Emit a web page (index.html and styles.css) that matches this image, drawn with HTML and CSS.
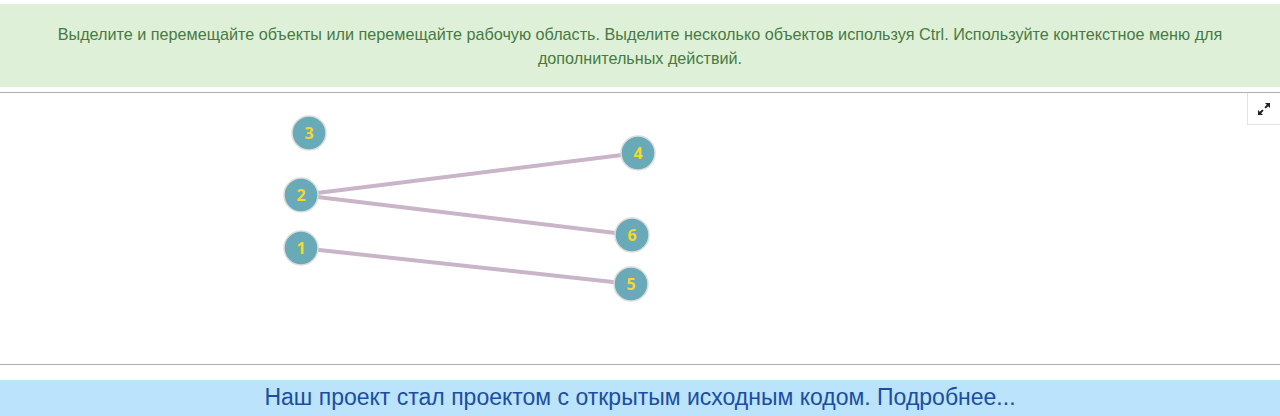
FILE: index.html
```html
<!DOCTYPE html>
<html lang="ru">
<head>
<meta charset="utf-8">
<link rel="stylesheet" href="styles.css">
</head>
<body>
<div class="page">
  <div class="alert">Выделите и перемещайте объекты или перемещайте рабочую область. Выделите несколько объектов используя Ctrl. Используйте контекстное меню для дополнительных действий.</div>
  <div class="canvas">
    <svg class="graph" width="1280" height="271" viewBox="0 93 1280 271">
      <g class="edges">
        <line x1="301" y1="195" x2="638" y2="153"/>
        <line x1="301" y1="195" x2="632" y2="235"/>
        <line x1="301" y1="248" x2="631" y2="284"/>
      </g>
      <g class="nodes">
        <circle cx="309" cy="133" r="17"/><text x="309" y="139">3</text>
        <circle cx="301" cy="195" r="17"/><text x="301" y="201">2</text>
        <circle cx="301" cy="248" r="17"/><text x="301" y="254">1</text>
        <circle cx="638" cy="153" r="17"/><text x="638" y="159">4</text>
        <circle cx="632" cy="235" r="17"/><text x="632" y="241">6</text>
        <circle cx="631" cy="284" r="17"/><text x="631" y="290">5</text>
      </g>
    </svg>
    <button class="fullscreen" aria-label="fullscreen">
      <svg width="14" height="14" viewBox="0 0 14 14">
        <path d="M8 1h5v5l-1.8-1.8-2.4 2.4-1.4-1.4 2.4-2.4z M6 13H1V8l1.8 1.8 2.4-2.4 1.4 1.4-2.4 2.4z" fill="#222"/>
      </svg>
    </button>
  </div>
  <div class="spacer"></div>
  <div class="notice">Наш проект стал проектом с открытым исходным кодом. Подробнее...</div>
</div>
</body>
</html>
```

FILE: styles.css
```css
html, body {
  margin: 0;
  padding: 0;
  background: #fff;
}
body {
  font-family: "Liberation Sans", Arial, sans-serif;
  overflow: hidden;
}
.page {
  display: flex;
  flex-direction: column;
  padding-top: 4px;
}
.alert {
  background: #dff0d8;
  color: #467a42;
  font-size: 16.2px;
  line-height: 24px;
  text-align: center;
  padding: 18px 40px 0;
  height: 65px;
  box-sizing: content-box;
  margin-bottom: 5px;
}
.canvas {
  position: relative;
  height: 271px;
  border-top: 1px solid #b0b0b0;
  border-bottom: 1px solid #b0b0b0;
  overflow: hidden;
}
.graph {
  display: block;
}
.edges line {
  stroke: #c9b4c8;
  stroke-width: 4;
  stroke-linecap: round;
}
.nodes circle {
  fill: #69aab8;
  stroke: #dcdcdc;
  stroke-width: 1.5;
}
.nodes text {
  fill: #f5d829;
  font-family: "Open Sans", "Liberation Sans", sans-serif;
  font-weight: 700;
  font-size: 16px;
  text-anchor: middle;
}
.fullscreen {
  position: absolute;
  top: 0;
  right: 0;
  width: 33px;
  height: 32px;
  background: #fff;
  border: none;
  border-left: 1px solid #e2e2e2;
  border-bottom: 1px solid #e2e2e2;
  padding: 0;
  display: flex;
  align-items: center;
  justify-content: center;
}
.spacer {
  height: 15px;
}
.notice {
  background: #bbe3fc;
  color: #1b4ea0;
  font-size: 23px;
  line-height: 34px;
  height: 36px;
  text-align: center;
}
```
